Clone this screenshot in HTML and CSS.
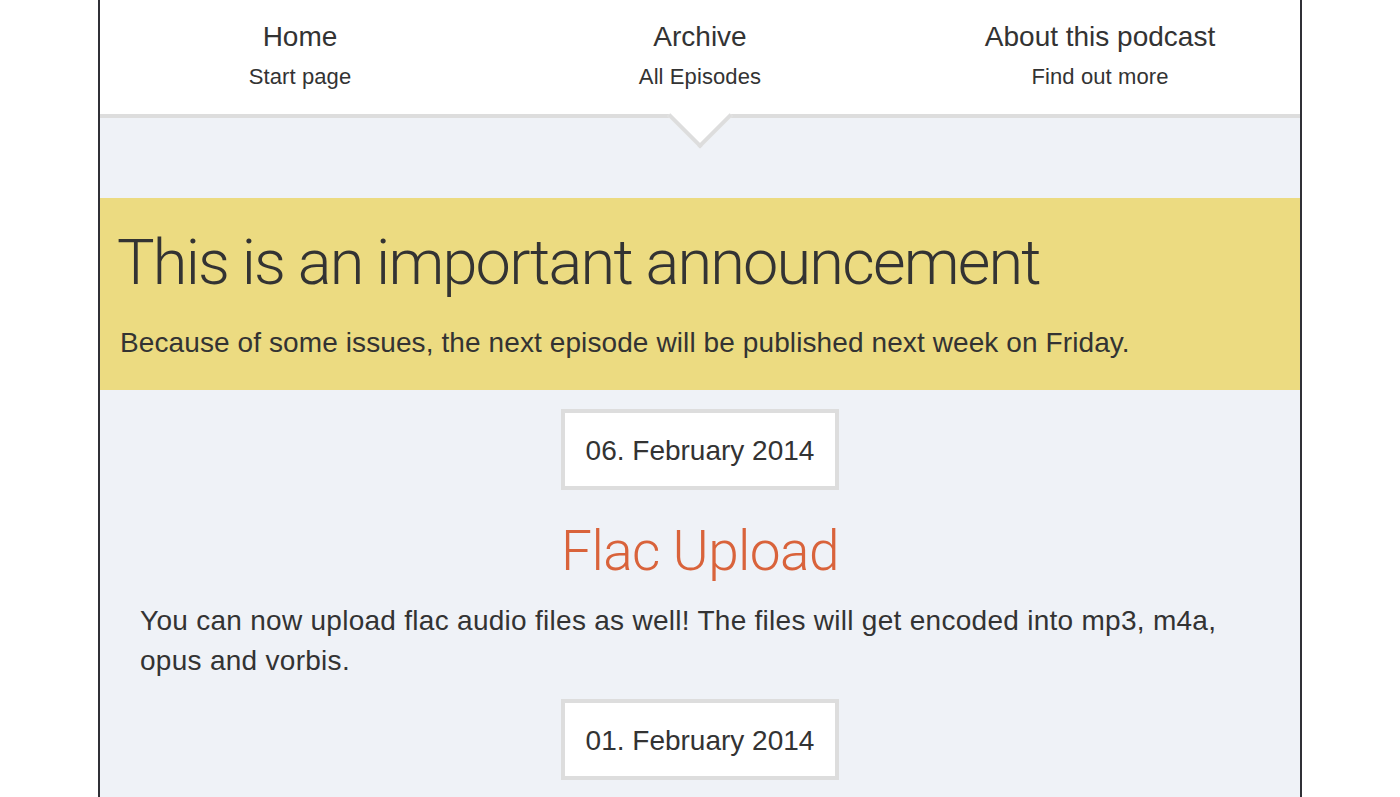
FILE: index.html
```html
<!DOCTYPE html>
<html lang="en">
<head>
<meta charset="utf-8">
<title>Podcast</title>
<link rel="stylesheet" href="styles.css">
</head>
<body>
<div class="page">
  <nav class="nav">
    <a class="nav-item" href="#">
      <span class="nav-title">Home</span>
      <span class="nav-sub">Start page</span>
    </a>
    <a class="nav-item active" href="#">
      <span class="nav-title">Archive</span>
      <span class="nav-sub">All Episodes</span>
    </a>
    <a class="nav-item" href="#">
      <span class="nav-title">About this podcast</span>
      <span class="nav-sub">Find out more</span>
    </a>
  </nav>
  <main class="main">
    <section class="announcement">
      <h1 class="announcement-title">This is an important announcement</h1>
      <p class="announcement-text">Because of some issues, the next episode will be published next week on Friday.</p>
    </section>
    <article class="episode">
      <div class="date-wrap"><div class="date">06. February 2014</div></div>
      <h2 class="episode-title">Flac Upload</h2>
      <p class="episode-text">You can now upload flac audio files as well! The files will get encoded into mp3, m4a, opus and vorbis.</p>
    </article>
    <article class="episode">
      <div class="date-wrap"><div class="date">01. February 2014</div></div>
    </article>
  </main>
</div>
</body>
</html>
```
FILE: styles.css
```css
html, body {
  margin: 0;
  padding: 0;
  background: #ffffff;
}
body {
  font-family: "Liberation Sans", Arial, sans-serif;
  color: #333333;
}
.page {
  width: 1200px;
  margin: 0 auto;
  min-height: 100vh;
  border-left: 2px solid #303036;
  border-right: 2px solid #303036;
  background: #eff2f7;
  overflow: hidden;
}
.nav {
  display: grid;
  grid-template-columns: 1fr 1fr 1fr;
  background: #ffffff;
  border-bottom: 4px solid #dddddd;
}
.nav-item {
  position: relative;
  display: flex;
  flex-direction: column;
  align-items: center;
  padding: 17px 0 22px;
  color: #333333;
  text-decoration: none;
}
.nav-title {
  font-size: 28px;
  line-height: 40px;
}
.nav-sub {
  font-size: 22px;
  line-height: 30px;
  margin-top: 5px;
  letter-spacing: 0.1px;
}
.nav-item.active::after {
  content: "";
  position: absolute;
  left: 50%;
  top: 100%;
  width: 46px;
  height: 46px;
  box-sizing: border-box;
  margin-left: -23px;
  margin-top: -21.5px;
  background: #ffffff;
  border-right: 4px solid #dddddd;
  border-bottom: 4px solid #dddddd;
  transform: rotate(45deg);
}
.main {
  padding-top: 80px;
  padding-bottom: 40px;
}
.announcement {
  background: #ecdb81;
  padding: 25px 20px 27px;
}
.announcement-title {
  margin: 0 0 0 -3px;
  font-family: Roboto, "Liberation Sans", sans-serif;
  font-weight: 300;
  font-size: 63px;
  letter-spacing: -1.8px;
  line-height: 80px;
  color: #333333;
}
.announcement-text {
  margin: 20px 0 0;
  font-size: 28px;
  line-height: 40px;
  letter-spacing: 0.1px;
}
.episode {
  padding: 0 40px;
}
.date-wrap {
  display: flex;
  justify-content: center;
  margin-top: 19px;
}
.episode + .episode .date-wrap {
  margin-top: 18px;
}
.date {
  background: #ffffff;
  border: 4px solid #dddddd;
  padding: 18px 21px 15px;
  font-size: 28px;
  line-height: 40px;
}
.episode-title {
  margin: 28px 0 0;
  text-align: center;
  font-family: Roboto, "Liberation Sans", sans-serif;
  font-weight: 300;
  font-size: 55px;
  letter-spacing: -0.6px;
  line-height: 67px;
  color: #d9633b;
}
.episode-text {
  margin: 16px 0 0;
  font-size: 28px;
  line-height: 40px;
  letter-spacing: 0.28px;
}
```
